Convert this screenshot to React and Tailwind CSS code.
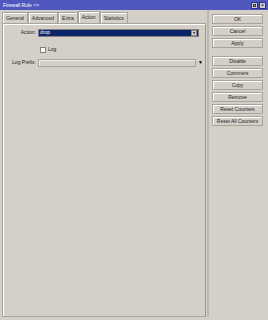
import { useState } from "react";

const tabs = ["General", "Advanced", "Extra", "Action", "Statistics"];
const topButtons = ["OK", "Cancel", "Apply"];
const moreButtons = ["Disable", "Comment", "Copy", "Remove", "Reset Counters", "Reset All Counters"];

function Btn({ label }) {
  return (
    <button className="h-[10px] w-full border border-[#a8a49c] bg-[#d4d0c8] text-[5px] leading-none text-[#222] shadow-[inset_1px_1px_0_#fff]">
      {label}
    </button>
  );
}

export default function App() {
  const [tab, setTab] = useState("Action");
  const [log, setLog] = useState(false);

  return (
    <div className="flex h-[320px] w-[268px] flex-col bg-[#d4d0c8] font-['Liberation_Sans',Arial,sans-serif] text-[5px] text-[#222]">
      <div className="flex h-[10px] items-center justify-between bg-[#5058c0] pl-[3px] pr-[2px] text-white">
        <span className="text-[5px] leading-none">Firewall Rule &lt;&gt;</span>
        <div className="flex gap-[1px]">
          <div className="flex h-[7px] w-[7px] items-center justify-center border border-[#2a2f80] bg-[#d4d0c8]">
            <div className="h-[3px] w-[3px] border border-[#333]" />
          </div>
          <div className="flex h-[7px] w-[7px] items-center justify-center border border-[#2a2f80] bg-[#d4d0c8] text-[5px] leading-none text-black">
            ×
          </div>
        </div>
      </div>

      <div className="flex flex-1 pb-[3px]">
        <div className="flex w-[206px] flex-col pl-[2px]">
          <div className="flex h-[13px] items-end">
            {tabs.map(t => (
              <button
                key={t}
                onClick={() => setTab(t)}
                className={
                  t === tab
                    ? "h-[12px] border border-b-0 border-[#a8a49c] bg-[#d4d0c8] px-[3px] text-[5px] leading-none shadow-[inset_1px_1px_0_#fff]"
                    : "h-[11px] border border-b-0 border-[#a8a49c] bg-[#d4d0c8] px-[3px] text-[5px] leading-none shadow-[inset_1px_1px_0_#fff]"
                }
              >
                {t}
              </button>
            ))}
          </div>
          <div className="flex flex-1 flex-col border border-[#a8a49c] border-r-[#9c9890] shadow-[inset_1px_1px_0_#fff] pt-[5px]">
            <div className="flex h-[8px] items-center">
              <span className="w-[35px] pr-[2px] text-right">Action:</span>
              <div className="flex h-[8px] w-[161px] items-center justify-between border border-[#808080] bg-[#0a246a] pl-[1px] pr-[1px]">
                <span className="text-white">drop</span>
                <div className="flex h-[6px] w-[6px] items-center justify-center border border-[#888] bg-[#d4d0c8] text-[4px] leading-none text-black">
                  ▾
                </div>
              </div>
            </div>
            <div className="mt-[9px] flex items-center pl-[37px]">
              <button
                onClick={() => setLog(!log)}
                className="h-[6px] w-[6px] border border-[#808080] bg-white"
              />
              <span className="ml-[2px]">Log</span>
            </div>
            <div className="mt-[5px] flex h-[8px] items-center">
              <span className="w-[35px] pr-[2px] text-right">Log Prefix:</span>
              <div className="h-[8px] w-[158px] border border-[#a8a49c] bg-[#d4d0c8] shadow-[inset_1px_1px_0_#eee]" />
              <span className="ml-[2px] text-[5px] leading-none text-black">▼</span>
            </div>
          </div>
        </div>

        <div className="ml-[1px] w-[2px] bg-[#bcb8b0]" />

        <div className="flex flex-1 flex-col pl-[3px] pr-[5px] pt-[4px]">
          <div className="flex flex-col gap-[2px]">
            {topButtons.map(b => (
              <Btn key={b} label={b} />
            ))}
          </div>
          <div className="mt-[8px] flex flex-col gap-[2px]">
            {moreButtons.map(b => (
              <Btn key={b} label={b} />
            ))}
          </div>
        </div>
      </div>
    </div>
  );
}
